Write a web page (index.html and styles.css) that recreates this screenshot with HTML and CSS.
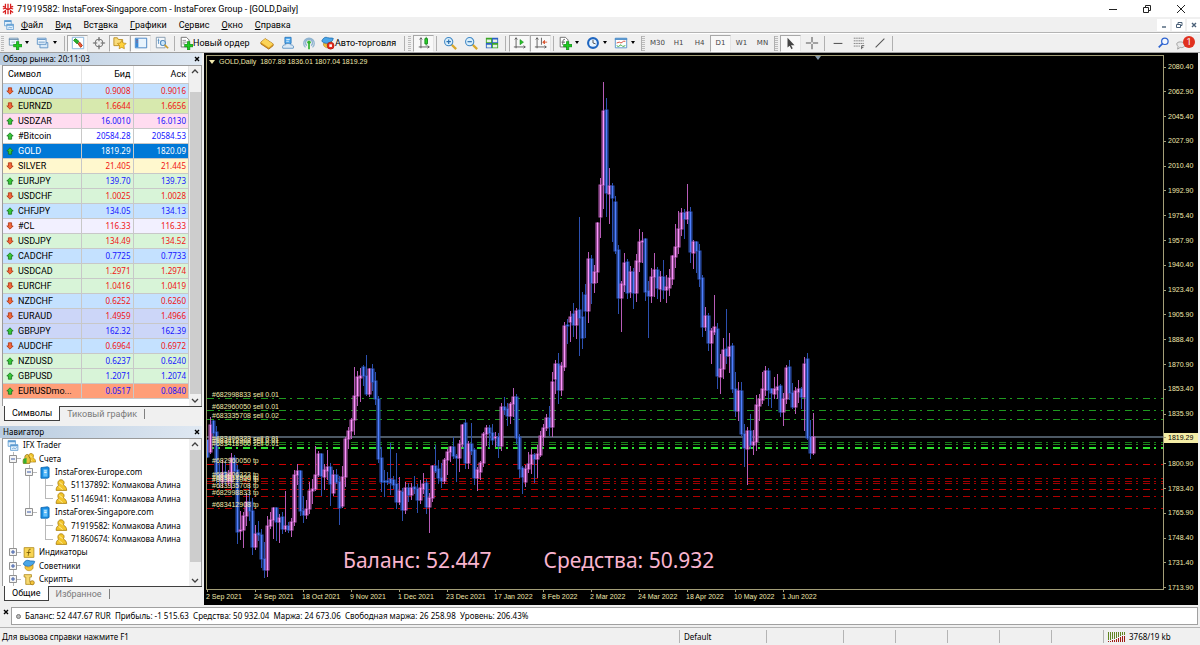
FILE: index.html
```html
<!DOCTYPE html>
<html lang="ru">
<head>
    <meta charset="UTF-8">
    <meta name="viewport" content="width=device-width, initial-scale=1.0">
    <title>71919582: InstaForex-Singapore.com - InstaForex Group - [GOLD,Daily]</title>
    <link rel="stylesheet" href="styles.css">
</head>
<body>

    <!-- Iconos compartidos -->
    <svg class="sprite" aria-hidden="true">
        <symbol id="i-windows" viewBox="0 0 16 16">
            <path d="M2 2h9v7H2z" fill="#e4f1fc" stroke="#5e9bd0"/><path d="M2 2h9v2H2z" fill="#5e9bd0"/>
            <path d="M5 7h9v7H5z" fill="#e4f1fc" stroke="#5e9bd0"/><path d="M5 7h9v2H5z" fill="#5e9bd0"/>
            <path d="M7 12l2-1 2 1 2-2" fill="none" stroke="#5e9bd0"/>
        </symbol>
        <symbol id="i-plus" viewBox="0 0 8 8">
            <path d="M3 0h2v3h3v2H5v3H3V5H0V3h3z" fill="#1fce1f" stroke="#0a8a12" stroke-width=".7"/>
        </symbol>
        <symbol id="i-user" viewBox="0 0 16 16">
            <path d="M2 14c0-3 1-5 3-6C3 4 5 1 8 1s5 3 3 6c2 2 4 3 4 7z" fill="#f2c52c" stroke="#a67a0c"/>
            <path d="M6 4l4 3M5 9l5 4" stroke="#fff3b0"/>
        </symbol>
        <symbol id="i-server" viewBox="0 0 16 16">
            <path d="M3 2l8-1 2 1v12l-2 1H3z" fill="#1b8fe4" stroke="#0b62ad"/>
            <path d="M6 4h5v9H6z" fill="#65c0fa"/><path d="M7 6h3M7 8h3" stroke="#fff"/>
        </symbol>
        <symbol id="i-up" viewBox="0 0 10 10"><path d="M5 1l4 4H7v4H3V5H1z" fill="#37c837" stroke="#17731d"/></symbol>
        <symbol id="i-down" viewBox="0 0 10 10"><path d="M5 9l4-4H7V1H3v4H1z" fill="#f4673a" stroke="#a83212"/></symbol>
        <symbol id="i-caret" viewBox="0 0 6 4"><path d="M1 0h4L3 3z" fill="#000"/></symbol>
        <symbol id="i-chev-up" viewBox="0 0 8 8"><path d="M1 5l3-3 3 3" fill="none" stroke="#404040" stroke-width="1.3"/></symbol>
        <symbol id="i-chev-down" viewBox="0 0 8 8"><path d="M1 3l3 3 3-3" fill="none" stroke="#404040" stroke-width="1.3"/></symbol>
        <symbol id="i-x" viewBox="0 0 8 8"><path d="M2 2l4 4M6 2L2 6" stroke="#000" stroke-width="1.4"/></symbol>
        <symbol id="i-plusbox" viewBox="0 0 8 8"><path d="M.5 .5h7v7h-7z" fill="#f4f4f4" stroke="#919191"/><path d="M2 4h4M4 2v4" stroke="#3a5aa8"/></symbol>
        <symbol id="i-minusbox" viewBox="0 0 8 8"><path d="M.5 .5h7v7h-7z" fill="#f4f4f4" stroke="#919191"/><path d="M2 4h4" stroke="#3a5aa8"/></symbol>
        <symbol id="i-expert" viewBox="0 0 16 16">
            <path d="M1 6c2-4 4-5 7-4s5 0 7 1c-1 4-4 6-8 6-3 0-5-1-6-3z" fill="#4aa6e8" stroke="#1b6bb0"/>
            <path d="M3 9l5 1 5-3v4c-1 4-8 5-10 0z" fill="#f4c63e" stroke="#a97d15" stroke-width=".7"/>
        </symbol>
    </svg>

    <header class="titlebar">
        <svg class="logo" viewBox="0 0 14 14"><path d="M7 1v12M4 1v4L1 4M10 1v4l3-1M1 7l3-1 3 2 3-2 3 1M4 13V9l-3 2M10 13V9l3 2" fill="none" stroke="#d81e1e" stroke-width="1.5"/></svg>
        <h1>71919582: InstaForex-Singapore.com - InstaForex Group - [GOLD,Daily]</h1>
        <div class="window-controls">
            <button type="button" aria-label="Свернуть"><svg viewBox="0 0 10 10"><path d="M1 5.500h8" stroke="#222"/></svg></button>
            <button type="button" aria-label="Восстановить"><svg viewBox="0 0 10 10"><path d="M1.500 3.500h5v5h-5zM3.500 3V1.500h5v5H7" fill="none" stroke="#222"/></svg></button>
            <button type="button" aria-label="Закрыть"><svg viewBox="0 0 10 10"><path d="M1 1l8 8M9 1L1 9" stroke="#222"/></svg></button>
        </div>
    </header>

    <nav class="menubar">
        <svg class="icon"><use href="#i-windows"/></svg>
        <button type="button"><u>Ф</u>айл</button>
        <button type="button"><u>В</u>ид</button>
        <button type="button">Вст<u>а</u>вка</button>
        <button type="button"><u>Г</u>рафики</button>
        <button type="button">С<u>е</u>рвис</button>
        <button type="button"><u>О</u>кно</button>
        <button type="button"><u>С</u>правка</button>
        <div class="child-controls">
            <button type="button" aria-label="Свернуть график"><svg viewBox="0 0 8 8"><path d="M2 6h4" stroke="#4a6078" stroke-width="1.400"/></svg></button>
            <button type="button" aria-label="Восстановить график"><svg viewBox="0 0 8 8"><path d="M1.500 3.500h4v3h-4zM3 3V1.500h4v3H6" fill="none" stroke="#4a6078"/></svg></button>
            <button type="button" aria-label="Закрыть график"><svg viewBox="0 0 8 8"><path d="M2 2l4 4M6 2L2 6" stroke="#4a6078" stroke-width="1.400"/></svg></button>
        </div>
    </nav>

    <div class="toolbar">
        <span class="grip"></span>
        <button type="button" class="drop" aria-label="Новый график">
            <svg class="icon" viewBox="0 0 16 16"><path d="M1.500 2.500h10v8h-10z" fill="#eef6fd" stroke="#6b8fae"/><path d="M1 4h11" stroke="#6b8fae"/><path d="M4 7h4" stroke="#9ab5cc"/><use href="#i-plus" x="6" y="6" width="10" height="10"/></svg>
            <svg class="caret"><use href="#i-caret"/></svg>
        </button>
        <button type="button" class="drop" aria-label="Профили">
            <svg class="icon" viewBox="0 0 16 16"><path d="M4.500 7.500h9v6h-9z" fill="#d8e9f8" stroke="#5a8fc4"/><path d="M1.500 2.500h10v7h-10z" fill="#eef6fd" stroke="#5a8fc4"/><path d="M2 4h9M3 7h7" stroke="#5a8fc4"/></svg>
            <svg class="caret"><use href="#i-caret"/></svg>
        </button>
        <span class="sep"></span>
        <button type="button" class="pressed" aria-label="Обзор рынка"><svg class="icon" viewBox="0 0 16 16"><path d="M1.500 1.500h13v13h-13z" fill="#fff" stroke="#7fb0dc"/><path d="M3 5l2-2 4 3-2 3z" fill="#28b828" stroke="#147a1a"/><path d="M8 9l2-2 3 4-2 2z" fill="#ef5a36" stroke="#a83212"/></svg></button>
        <button type="button" aria-label="Окно данных"><svg class="icon" viewBox="0 0 16 16"><circle cx="8" cy="8" r="4.500" fill="none" stroke="#666"/><path d="M8 1v5M8 10v5M1 8h5M10 8h5" stroke="#666" stroke-width="1.300"/></svg></button>
        <button type="button" class="pressed" aria-label="Навигатор"><svg class="icon" viewBox="0 0 16 16"><path d="M1 2h4l1 2h5v7H1z" fill="#f9dc7c" stroke="#b98b1b"/><path d="M10 5l1.500 3 3.500.5-2.500 2.500.5 3.500-3-1.500-3 1.500.5-3.500L5 8.500 8.500 8z" fill="#ffd23c" stroke="#bb8612" stroke-width=".8"/></svg></button>
        <button type="button" class="pressed" aria-label="Терминал"><svg class="icon" viewBox="0 0 16 16"><path d="M1.500 2.500h13v11h-13z" fill="#e9f4fd" stroke="#3a7cc0"/><path d="M2 3h3v10H2z" fill="#3a8ad8"/><path d="M3 5h1M3 7h1" stroke="#f04030"/></svg></button>
        <button type="button" aria-label="Тестер стратегий"><svg class="icon" viewBox="0 0 16 16"><path d="M1.500 1.500h10v12h-10z" fill="#f4f8fc" stroke="#8298ab"/><path d="M4 3v6M7 5v6M3 5h2" stroke="#5c93c4"/><circle cx="9" cy="8" r="3" fill="#bfe0f8" fill-opacity=".8" stroke="#3b7cb8"/><path d="M11 10l4 4" stroke="#c89a2a" stroke-width="2"/></svg></button>
        <span class="sep"></span>
        <button type="button" class="order"><svg class="icon" viewBox="0 0 16 16"><path d="M2.500 1.500h6l3 3v8h-9z" fill="#fff" stroke="#666"/><path d="M4 5h4M4 7h5M4 9h3" stroke="#888"/><use href="#i-plus" x="6" y="6" width="10" height="10"/></svg>Новый ордер</button>
        <button type="button" aria-label="Редактор"><svg class="icon" viewBox="0 0 16 16"><path d="M1 7l5-4 9 6v2l-5 4-9-6z" fill="#e0a022" stroke="#a8701a"/><path d="M1 7l5-4 9 6-5 4z" fill="#fbd458"/></svg></button>
        <button type="button" aria-label="Виртуальный хостинг"><svg class="icon" viewBox="0 0 16 16"><path d="M4.500 1.500h7v7h-7z" fill="#58aef0" stroke="#2474bb"/><path d="M6 4h4M6 6h3" stroke="#e4f4ff"/><path d="M2 14c-1-3 1-4 3-4 1-2 5-2 6 0 3 0 4 2 3 4z" fill="#dbe9f5" stroke="#5d92c2"/></svg></button>
        <button type="button" aria-label="Сигналы"><svg class="icon" viewBox="0 0 16 16"><path d="M4 13a6 6 0 1 1 8 0M5.500 11a4 4 0 1 1 5 0" fill="none" stroke="#8fb4d0" stroke-width="1.500"/><circle cx="8" cy="7" r="2" fill="#35b535"/><path d="M8 8v7" stroke="#35b535" stroke-width="2"/></svg></button>
        <button type="button" class="auto"><svg class="icon" viewBox="0 0 16 16"><use href="#i-expert" width="15" height="15"/><circle cx="11" cy="11" r="4" fill="#e32a1c" stroke="#9d120a" stroke-width=".6"/><path d="M9.500 9.500h3v3h-3z" fill="#fff"/></svg>Авто-торговля</button>
        <span class="sep"></span>
        <span class="grip"></span>
        <button type="button" class="pressed" aria-label="Японские свечи"><svg class="icon" viewBox="0 0 16 16"><path d="M4.500 2v12M2 12.500h12M3 4l1.500-2L6 4M12 11l2 1.500-2 1.500" fill="none" stroke="#555"/><path d="M10.500 1v10" stroke="#128a18"/><path d="M9 3h3v6H9z" fill="#2bd02b" stroke="#128a18"/></svg></button>
        <span class="sep"></span>
        <button type="button" aria-label="Увеличить"><svg class="icon" viewBox="0 0 16 16"><path d="M10 10l5 5" stroke="#d9a82c" stroke-width="2.600"/><circle cx="6.500" cy="6.500" r="4.700" fill="#d8effc" stroke="#3f86c4" stroke-width="1.200"/><path d="M4 6.500h5M6.500 4v5" stroke="#2a6fb0" stroke-width="1.300"/></svg></button>
        <button type="button" aria-label="Уменьшить"><svg class="icon" viewBox="0 0 16 16"><path d="M10 10l5 5" stroke="#d9a82c" stroke-width="2.600"/><circle cx="6.500" cy="6.500" r="4.700" fill="#d8effc" stroke="#3f86c4" stroke-width="1.200"/><path d="M4 6.500h5" stroke="#2a6fb0" stroke-width="1.300"/></svg></button>
        <button type="button" aria-label="Окна мозаикой"><svg class="icon" viewBox="0 0 16 16"><path d="M1 2h7v6H1zM8 8h7v6H8z" fill="#3aa526"/><path d="M8 2h7v6H8zM1 8h7v6H1z" fill="#2a5fc4"/><path d="M2 4h5v3H2zM9 4h5v3H9zM2 10h5v3H2zM9 10h5v3H9z" fill="#e6f2e6"/></svg></button>
        <span class="sep wide"></span>
        <button type="button" class="pressed" aria-label="Автопрокрутка"><svg class="icon" viewBox="0 0 16 16"><path d="M3.500 2v12M1 12.500h13M2 4l1.500-2L5 4M12 11l2 1.500-2 1.500" fill="none" stroke="#555"/><path d="M8 4l4 3-4 3z" fill="#2bc02b" stroke="#128a18" stroke-width=".6"/></svg></button>
        <button type="button" class="pressed" aria-label="Сдвиг графика"><svg class="icon" viewBox="0 0 16 16"><path d="M3.500 2v12M1 12.500h13M2 4l1.500-2L5 4M12 11l2 1.500-2 1.500M8.500 2v8" fill="none" stroke="#555"/><path d="M10 7l2-2v4zM12 7h3" fill="#d8502a" stroke="#d8502a"/></svg></button>
        <span class="sep"></span>
        <button type="button" class="drop" aria-label="Индикаторы">
            <svg class="icon" viewBox="0 0 16 16"><path d="M2.500 1.500h6l3 3v8h-9z" fill="#fff" stroke="#666"/><path d="M8 4c-3-1-2 3-3 6M4 7h4" fill="none" stroke="#555"/><use href="#i-plus" x="6" y="6" width="10" height="10"/></svg>
            <svg class="caret"><use href="#i-caret"/></svg>
        </button>
        <button type="button" class="drop" aria-label="Периоды">
            <svg class="icon" viewBox="0 0 16 16"><circle cx="8" cy="8" r="5.600" fill="#e9f5ff" stroke="#1f66c0" stroke-width="2.400"/><path d="M8 4.500V8l3 1" fill="none" stroke="#444"/></svg>
            <svg class="caret"><use href="#i-caret"/></svg>
        </button>
        <button type="button" class="drop" aria-label="Шаблоны">
            <svg class="icon" viewBox="0 0 16 16"><path d="M1.500 2.500h13v11h-13z" fill="#fff" stroke="#4f8fca"/><path d="M1 3.500h14" stroke="#4f8fca" stroke-width="2"/><path d="M3 8l3-1 2 1 3-2h2" fill="none" stroke="#d0402a"/><path d="M3 11l2 1 3-2 2 2 3-1" fill="none" stroke="#2aa23a"/></svg>
            <svg class="caret"><use href="#i-caret"/></svg>
        </button>
        <span class="grip line"></span>
        <button type="button" class="tf">M30</button>
        <button type="button" class="tf">H1</button>
        <button type="button" class="tf">H4</button>
        <button type="button" class="tf pressed">D1</button>
        <button type="button" class="tf">W1</button>
        <button type="button" class="tf">MN</button>
        <span class="grip line"></span>
        <button type="button" class="pressed" aria-label="Курсор"><svg class="icon" viewBox="0 0 16 16"><path d="M4 2v11l2.500-2 2 4 1.500-1-2-3.500H12z" fill="#444"/></svg></button>
        <button type="button" aria-label="Перекрестие"><svg class="icon" viewBox="0 0 16 16"><path d="M8 1v6M8 9v6M1 8h6M9 8h6" stroke="#555" stroke-width="1.200"/></svg></button>
        <span class="sep"></span>
        <button type="button" aria-label="Горизонтальная линия"><svg class="icon" viewBox="0 0 16 16"><path d="M3 8.500h10" stroke="#555" stroke-width="1.200"/></svg></button>
        <button type="button" aria-label="Линии Фибоначчи"><svg class="icon" viewBox="0 0 16 16"><path d="M2 2.500h12M2 5.500h12M2 8.500h12M2 11.500h7" stroke="#777" stroke-dasharray="1.500 .5"/><path d="M11 15v-4h3M11 13h2" fill="none" stroke="#555"/></svg></button>
        <button type="button" aria-label="Трендовая линия"><svg class="icon" viewBox="0 0 16 16"><path d="M3 13l10-10" stroke="#555" stroke-width="1.200"/></svg></button>
        <span class="sep"></span>
        <div class="toolbar-end">
            <button type="button" aria-label="Поиск"><svg class="icon" viewBox="0 0 16 16"><path d="M2 13l5-5" stroke="#2b62d0" stroke-width="2"/><circle cx="9" cy="6" r="3.700" fill="#f4f8ff" stroke="#2b62d0" stroke-width="1.400"/></svg></button>
            <button type="button" class="chat" aria-label="Сообщения"><svg class="icon" viewBox="0 0 16 16"><path d="M2 9c0-3 8-3 9 0s-2 5-5 4l-3 2 .5-3C2.500 11 2 10 2 9z" fill="#e8e8e8" stroke="#9a9a9a"/></svg><span class="badge">1</span></button>
        </div>
    </div>

    <main class="workspace">
        <aside class="side">
            <section class="panel market">
                <div class="panel-title"><h2>Обзор рынка: 20:11:03</h2><button type="button" aria-label="Закрыть обзор рынка"><svg><use href="#i-x"/></svg></button></div>
                <div class="panel-body">
                    <table>
                        <thead><tr><th>Символ</th><th>Бид</th><th>Аск</th></tr></thead>
                        <tbody id="quotes"></tbody>
                    </table>
                    <div class="scrollbar"><svg><use href="#i-chev-up"/></svg><span class="thumb"></span><svg><use href="#i-chev-down"/></svg></div>
                </div>
                <div class="tabs"><button type="button" class="active">Символы</button><button type="button">Тиковый график</button></div>
            </section>

            <section class="panel navigator">
                <div class="panel-title"><h2>Навигатор</h2><button type="button" aria-label="Закрыть навигатор"><svg><use href="#i-x"/></svg></button></div>
                <div class="panel-body">
                    <ul class="tree">
                        <li><svg class="node"><use href="#i-windows"/></svg>IFX Trader</li>
                        <li><button type="button" class="guide elbow" aria-label="Свернуть Счета"><svg><use href="#i-minusbox"/></svg></button><svg class="node" viewBox="0 0 16 16"><use href="#i-user" x="4" y="0" width="13" height="15"/><path d="M1 14c-1-5 1-6 2-7-1-4 5-6 5-1 2 2 2 4 1 8z" fill="#e8c33c" stroke="#937012"/><path d="M1 14V9l4-2v7z" fill="#35ae30"/></svg>Счета</li>
                        <li><span class="guide"></span><button type="button" class="guide elbow" aria-label="Свернуть InstaForex-Europe.com"><svg><use href="#i-minusbox"/></svg></button><svg class="node"><use href="#i-server"/></svg>InstaForex-Europe.com</li>
                        <li><span class="guide"></span><span class="guide"></span><span class="guide elbow"></span><svg class="node"><use href="#i-user"/></svg>51137892: Колмакова Алина</li>
                        <li><span class="guide"></span><span class="guide"></span><span class="guide elbow last"></span><svg class="node"><use href="#i-user"/></svg>51146941: Колмакова Алина</li>
                        <li><span class="guide"></span><button type="button" class="guide elbow last" aria-label="Свернуть InstaForex-Singapore.com"><svg><use href="#i-minusbox"/></svg></button><svg class="node"><use href="#i-server"/></svg>InstaForex-Singapore.com</li>
                        <li><span class="guide"></span><span class="guide empty"></span><span class="guide elbow"></span><svg class="node"><use href="#i-user"/></svg>71919582: Колмакова Алина</li>
                        <li><span class="guide"></span><span class="guide empty"></span><span class="guide elbow last"></span><svg class="node"><use href="#i-user"/></svg>71860674: Колмакова Алина</li>
                        <li><button type="button" class="guide elbow" aria-label="Развернуть Индикаторы"><svg><use href="#i-plusbox"/></svg></button><svg class="node" viewBox="0 0 16 16"><path d="M2 2h12v12H2z" fill="#f8d452" stroke="#b08a1c"/><path d="M10 4c-3-1-2 3-3 8M5 8h5" fill="none" stroke="#6a4d00"/></svg>Индикаторы</li>
                        <li><button type="button" class="guide elbow" aria-label="Развернуть Советники"><svg><use href="#i-plusbox"/></svg></button><svg class="node"><use href="#i-expert"/></svg>Советники</li>
                        <li><button type="button" class="guide elbow" aria-label="Развернуть Скрипты"><svg><use href="#i-plusbox"/></svg></button><svg class="node" viewBox="0 0 16 16"><path d="M2 2h9v3H9v6h4v3H4V5H2z" fill="#f7d971" stroke="#b08a1c"/><circle cx="12" cy="12" r="2.500" fill="#f4c63e" stroke="#a97d15"/></svg>Скрипты</li>
                    </ul>
                    <div class="scrollbar"><svg><use href="#i-chev-up"/></svg><span class="thumb"></span><svg><use href="#i-chev-down"/></svg></div>
                </div>
                <div class="tabs"><button type="button" class="active">Общие</button><button type="button">Избранное</button></div>
            </section>
        </aside>

        <section class="chart">
            <div class="plot">
                <svg id="plot" class="plot-canvas"></svg>
                <p class="chart-title"><svg viewBox="0 0 6 4"><path d="M0 0h6L3 4z" fill="#f0e8ac"/></svg>GOLD,Daily&nbsp; 1807.89 1836.01 1807.04 1819.29</p>
                <p class="totals"><span>Баланс: 52.447</span><span>Средства: 50.932</span></p>
            </div>
            <ol id="prices" class="price-axis"></ol>
            <ol id="dates" class="time-axis"></ol>
        </section>
    </main>

    <section class="account">
        <button type="button" aria-label="Закрыть терминал"><svg><use href="#i-x"/></svg></button>
        <p><span class="dot"></span>Баланс: 52 447.67 RUR&nbsp; Прибыль: -1 515.63&nbsp; Средства: 50 932.04&nbsp; Маржа: 24 673.06&nbsp; Свободная маржа: 26 258.98&nbsp; Уровень: 206.43%</p>
    </section>

    <footer class="statusbar">
        <span class="hint">Для вызова справки нажмите F1</span>
        <span class="profile">Default</span>
        <span class="cell first"></span>
        <span class="cell"></span>
        <span class="cell"></span>
        <span class="cell"></span>
        <span class="cell"></span>
        <span class="cell"></span>
        <span class="traffic">
            <svg viewBox="0 0 18 10"><path d="M.5 0v8M2.500 0v8M4.500 0v7M6.500 0v7M8.500 0v6M10.500 0v5M12.500 0v4M14.500 0v3M16.500 0v3" stroke="#5f8420"/><path d="M.5 9v1M2.500 9v1M4.500 8v2M6.500 8v2M8.500 7v3M10.500 6v4M12.500 5v5M14.500 4v6M16.500 4v6" stroke="#a01810"/></svg>
            3768/19 kb
        </span>
    </footer>

    <script src="chart.js"></script>
</body>
</html>
```

FILE: styles.css
```css
* {
    box-sizing: border-box;
}

body {
    margin: 0;
    min-height: 100vh;
    display: flex;
    flex-direction: column;
    background: #f0f0f0;
    color: #000;
    font-family: "Noto Sans", "Open Sans", sans-serif;
    font-size: 8px;
    line-height: 12px;
}

.titlebar,
.menubar,
.toolbar,
.tabs,
th,
.symbol {
    font-family: Roboto, "Noto Sans", sans-serif;
    font-size: 9px;
}

h1, h2, p, ul, ol {
    margin: 0;
    padding: 0;
    font-size: inherit;
    font-weight: normal;
    list-style: none;
}

button {
    display: flex;
    align-items: center;
    justify-content: center;
    margin: 0;
    padding: 0;
    border: none;
    background: none;
    color: inherit;
    font: inherit;
    white-space: nowrap;
}

.sprite {
    display: none;
}

.icon {
    width: 14px;
    height: 14px;
    flex: none;
}

/* Titulo y menu */
.titlebar {
    display: flex;
    align-items: center;
    height: 17px;
    padding-left: 2px;
    background: #fff;
}

.logo {
    width: 12px;
    height: 12px;
    margin-right: 3px;
}

.window-controls {
    display: flex;
    margin-left: auto;
    padding-right: 2px;
}

.window-controls button {
    width: 34px;
    height: 16px;
}

.window-controls svg {
    width: 10px;
    height: 10px;
}

.menubar {
    display: flex;
    align-items: center;
    height: 16px;
    padding-left: 3px;
    border-bottom: 1px solid #b4b4b4;
}

.menubar .icon {
    width: 12px;
    height: 12px;
}

.menubar > button {
    padding: 0 6px;
}

.child-controls {
    display: flex;
    gap: 2px;
    margin-left: auto;
}

.child-controls button {
    width: 13px;
    height: 12px;
    background: #fff;
}

.child-controls svg {
    width: 8px;
    height: 8px;
}

/* Barra de herramientas */
.toolbar {
    display: flex;
    align-items: center;
    height: 20px;
    border-top: 1px solid #fff;
    border-bottom: 1px solid #a0a0a0;
}

.toolbar button {
    width: 21px;
    height: 17px;
    flex: none;
    border: 1px solid transparent;
}

.toolbar .drop {
    width: 28px;
    justify-content: flex-start;
    padding-left: 1px;
    gap: 2px;
}

.toolbar .pressed {
    background: #f8f8f8;
    border-color: #a8a8a8 #e4e4e4 #fff #a8a8a8;
}

.toolbar .order {
    width: 79px;
    justify-content: flex-start;
    padding-left: 1px;
}

.toolbar .auto {
    width: 83px;
    justify-content: flex-start;
    padding-left: 1px;
}

.toolbar .tf {
    color: #444;
    font-family: "DejaVu Sans", sans-serif;
    font-size: 7px;
}

.caret {
    width: 6px;
    height: 4px;
}

.sep {
    width: 1px;
    height: 15px;
    margin: 0 2px;
    flex: none;
    background: #b0b0b0;
}

.sep.wide {
    margin: 0 3px;
}

.grip {
    width: 3px;
    height: 15px;
    margin: 0 2px 0 1px;
    flex: none;
    background: repeating-linear-gradient(#bcbcbc 0 1px, #f0f0f0 1px 2px);
}

.grip.line {
    width: 4px;
    border-left: 1px solid #b0b0b0;
}

.toolbar-end {
    display: flex;
    margin-left: auto;
    padding-right: 2px;
}

.toolbar .chat {
    position: relative;
    width: 24px;
    justify-content: flex-start;
}

.badge {
    position: absolute;
    top: 0;
    right: 2px;
    width: 12px;
    height: 12px;
    border-radius: 50%;
    background: #e0301e;
    color: #fff;
}

/* Zona principal */
.workspace {
    display: flex;
    flex: 1;
    min-height: 0;
}

.side {
    display: flex;
    flex-direction: column;
    gap: 5px;
    width: 202px;
    padding-bottom: 4px;
    flex: none;
}

.panel {
    display: flex;
    flex-direction: column;
}

.navigator {
    flex: 1;
}

.panel-title {
    display: flex;
    align-items: center;
    justify-content: space-between;
    height: 12px;
    padding: 0 1px 0 3px;
    background: linear-gradient(90deg, #b9cce0, #dfe8f2);
}

.panel-title svg,
.account svg {
    width: 8px;
    height: 8px;
}

.panel-body {
    display: flex;
    flex: 1;
    margin-left: 2px;
    border: 1px solid #9a9a9a;
    border-bottom: none;
    background: #fff;
}

table {
    flex: 1;
    margin-bottom: 7px;
    border-collapse: collapse;
    table-layout: fixed;
}

th, td {
    height: 15px;
    padding: 0 2px 0 0;
    border-right: 1px solid #c8c8c8;
    border-bottom: 1px solid #c8c8c8;
    text-align: right;
    font-weight: normal;
    line-height: 12px;
}

th {
    height: 17px;
    border-right-color: #e4e4e4;
}

th:first-child {
    width: 78px;
    padding-left: 5px;
    text-align: left;
}

th:nth-child(2) {
    width: 52px;
}

.symbol {
    display: flex;
    align-items: center;
    gap: 4px;
    padding-left: 3px;
}

.symbol svg {
    width: 8px;
    height: 8px;
}

.up {
    color: #1414ff;
}

.down {
    color: #f01414;
}

.blue { background: #c4e1ff; }
.olive { background: #d7e9ae; }
.pink { background: #ffdcf0; }
.yellow { background: #fff8ce; }
.green { background: #d8f4d8; }
.pale { background: #f2f0ff; }
.violet { background: #ccd6f8; }
.orange { background: #ff9e78; }

.selected,
.selected td {
    background: #0078d7;
    color: #fff;
}

.scrollbar {
    display: flex;
    flex-direction: column;
    align-items: center;
    width: 12px;
    padding: 2px 0;
    flex: none;
    background: #f0f0f0;
}

.scrollbar svg {
    width: 8px;
    height: 8px;
}

.scrollbar .thumb {
    flex: 1;
    width: 11px;
    margin: 1px 0 2px;
    background: #cdcdcd;
}

.market .thumb {
    margin-top: 16px;
}

.navigator .thumb {
    margin-bottom: 14px;
}

.tabs {
    display: flex;
    height: 15px;
    margin-left: 4px;
    border-top: 1px solid #404040;
    color: #7a7a7a;
}

.tabs button {
    padding: 0 7px;
}

.tabs button:last-child::after {
    content: "";
    height: 10px;
    margin-left: 7px;
    border-right: 1px solid #808080;
}

.tabs .active {
    margin-top: -1px;
    border: 1px solid #404040;
    border-top: none;
    background: #fff;
    color: #000;
}

/* Arbol del navegador */
.tree {
    display: flex;
    flex-direction: column;
    flex: 1;
    min-width: 0;
    padding-left: 2px;
}

.tree li {
    display: flex;
    align-items: center;
    flex: 1;
    white-space: nowrap;
}

.node {
    width: 14px;
    height: 13px;
    margin: 0 3px 0 1px;
    flex: none;
}

.guide {
    display: flex;
    align-self: stretch;
    width: 16px;
    flex: none;
    background: linear-gradient(#b8b8b8, #b8b8b8) 8px 0 / 1px 100% no-repeat;
}

.guide svg {
    width: 8px;
    height: 8px;
}

.elbow {
    background:
        linear-gradient(#b8b8b8, #b8b8b8) 8px 0 / 1px 100% no-repeat,
        linear-gradient(#b8b8b8, #b8b8b8) 8px 50% / 8px 1px no-repeat;
}

.elbow.last {
    background:
        linear-gradient(#b8b8b8, #b8b8b8) 8px 0 / 1px 50% no-repeat,
        linear-gradient(#b8b8b8, #b8b8b8) 8px 50% / 8px 1px no-repeat;
}

.guide.empty {
    background: none;
}

/* Grafico */
.chart {
    display: grid;
    grid-template-columns: 1fr 34px;
    grid-template-rows: 1fr 15px;
    flex: 1;
    margin: 0 2px 0 2px;
    padding: 2px 0 0 2px;
    background: #000;
    color: #f0e8ac;
    font-family: "Liberation Sans", Arial, sans-serif;
    font-size: 7px;
    line-height: 10px;
}

.plot {
    position: relative;
    display: flex;
    flex-direction: column;
    justify-content: space-between;
    border: 1px solid #a39e78;
}

.plot-canvas {
    position: absolute;
    inset: 0;
    width: 100%;
    height: 100%;
}

.plot-canvas text {
    fill: #f0e8ac;
}

.chart-title {
    display: flex;
    align-items: center;
    gap: 4px;
    padding: 1px 0 0 2px;
}

.chart-title svg {
    width: 6px;
    height: 4px;
}

.totals {
    position: relative;
    display: flex;
    gap: 52px;
    padding: 0 0 14px 136px;
    color: #f9b4cf;
    font-family: "Noto Sans", "Open Sans", sans-serif;
    font-size: 21px;
    line-height: 30px;
}

.price-axis {
    display: flex;
    flex-direction: column;
    justify-content: space-between;
    margin: 7px 0 -3px;
}

.price-axis li {
    display: flex;
    align-items: center;
    gap: 2px;
}

.price-axis li::before {
    content: "";
    width: 2px;
    height: 1px;
    background: #a39e78;
}

.price-axis .current {
    margin: -1px 0 1px;
    background: #f4eda6;
    color: #000;
}

.time-axis {
    display: flex;
}

.time-axis li {
    width: 48px;
    white-space: nowrap;
}

.time-axis li::before {
    content: "";
    display: block;
    width: 1px;
    height: 2px;
    margin-left: 1px;
    background: #a39e78;
}

.candle-up {
    stroke: #b85cb8;
    fill: #6c3a6c;
}

.candle-down {
    stroke: #2c50b0;
    fill: #213c80;
}

.core-up {
    stroke: #ff96ff;
}

.core-down {
    stroke: #4f80ff;
}

/* Terminal y barra de estado */
.account {
    display: flex;
    align-items: center;
    height: 23px;
    border-bottom: 1px solid #b4b4b4;
}

.account button {
    width: 11px;
    height: 16px;
    align-items: flex-start;
}

.account p {
    display: flex;
    align-items: center;
    gap: 4px;
    flex: 1;
    height: 18px;
    margin-right: 2px;
    padding-left: 4px;
    border: 1px solid #a0a0a0;
    background: #fff;
    white-space: nowrap;
}

.dot {
    width: 5px;
    height: 5px;
    border: 1px solid #777;
    border-radius: 50%;
    background: #bbb;
}

.statusbar {
    display: flex;
    align-items: center;
    height: 17px;
    padding-left: 2px;
}

.hint {
    flex: 1;
}

.profile,
.cell,
.traffic {
    display: flex;
    align-items: center;
    width: 52px;
    height: 13px;
    padding-left: 4px;
    border-left: 1px solid #b4b4b4;
}

.profile {
    width: 87px;
}

.cell.first {
    width: 77px;
}

.traffic {
    gap: 3px;
    width: 97px;
}

.traffic svg {
    width: 18px;
    height: 10px;
}
```

FILE: chart.js
```javascript
const quotes = [
    ['AUDCAD', '0.9008', '0.9016', 'down', 'blue'],
    ['EURNZD', '1.6644', '1.6656', 'down', 'olive'],
    ['USDZAR', '16.0010', '16.0130', 'up', 'pink'],
    ['#Bitcoin', '20584.28', '20584.53', 'up', ''],
    ['GOLD', '1819.29', '1820.09', 'up', 'selected'],
    ['SILVER', '21.405', '21.445', 'down', 'yellow'],
    ['EURJPY', '139.70', '139.73', 'up', 'green'],
    ['USDCHF', '1.0025', '1.0028', 'down', 'green'],
    ['CHFJPY', '134.05', '134.13', 'up', 'blue'],
    ['#CL', '116.33', '116.33', 'down', 'pale'],
    ['USDJPY', '134.49', '134.52', 'down', 'green'],
    ['CADCHF', '0.7725', '0.7733', 'up', 'blue'],
    ['USDCAD', '1.2971', '1.2974', 'down', 'green'],
    ['EURCHF', '1.0416', '1.0419', 'down', 'green'],
    ['NZDCHF', '0.6252', '0.6260', 'down', 'blue'],
    ['EURAUD', '1.4959', '1.4966', 'down', 'violet'],
    ['GBPJPY', '162.32', '162.39', 'up', 'violet'],
    ['AUDCHF', '0.6964', '0.6972', 'down', 'blue'],
    ['NZDUSD', '0.6237', '0.6240', 'up', 'green'],
    ['GBPUSD', '1.2071', '1.2074', 'up', 'green'],
    ['EURUSDmo...', '0.0517', '0.0840', 'up', 'orange']
];

document.getElementById('quotes').innerHTML = quotes.map(([name, bid, ask, dir, color]) =>
    `<tr class="${color}"><td><span class="symbol"><svg><use href="#i-${dir}"/></svg>${name}</span></td>` +
    `<td class="${dir}">${bid}</td><td class="${dir}">${ask}</td></tr>`
).join('');

const prices = ['2080.40', '2062.90', '2045.40', '2027.90', '2010.40', '1992.90', '1975.40', '1957.90',
    '1940.40', '1923.40', '1905.90', '1888.40', '1870.90', '1853.40', '1835.90', '1819.29',
    '1800.90', '1783.40', '1765.90', '1748.40', '1731.40', '1713.90'];

document.getElementById('prices').innerHTML = prices.map(p =>
    `<li${p === '1819.29' ? ' class="current"' : ''}>${p}</li>`
).join('');

const dates = ['2 Sep 2021', '24 Sep 2021', '18 Oct 2021', '9 Nov 2021', '1 Dec 2021', '23 Dec 2021',
    '17 Jan 2022', '8 Feb 2022', '2 Mar 2022', '24 Mar 2022', '18 Apr 2022', '10 May 2022', '1 Jun 2022'];

document.getElementById('dates').innerHTML = dates.map(d => `<li>${d}</li>`).join('');

// u/d + high, open/close top, open/close bottom, low
const candles = `
d440,440,457,457 u417,425,452,453 d420,421,433,435 d426,432,475,482 d463,474,480,487 u460,473,482,487
d460,472,480,484 u470,474,482,485 u453,458,482,488 d455,458,471,474 d465,470,532,543 u511,530,531,539
u512,516,530,547 u493,502,516,525 d483,502,511,520 d498,511,547,554 u525,534,547,549 d521,533,535,540
d529,535,559,567 d542,559,570,577 u516,526,570,576 u512,520,526,528 u507,508,520,538 d507,508,522,540
u514,518,522,542 d512,517,529,533 u491,526,529,531 d522,526,530,532 u518,522,530,536 u470,475,522,525
u464,471,475,484 d470,471,511,515 d496,511,515,522 u500,509,515,518 u482,491,509,513 u479,489,491,503
u446,475,489,490 u451,454,475,476 d453,454,476,495 u464,470,477,489 u450,467,471,479 d463,467,484,505
u470,475,493,495 d469,475,482,483 d476,482,508,524 u466,477,506,507 u437,439,477,486 u427,431,439,448
u418,420,431,438 u367,396,420,434 u371,377,396,405 u368,376,378,401 d365,367,376,385 d355,376,394,395
u368,369,394,396 d364,369,382,390 d372,381,399,404 d396,399,459,462 d447,458,482,491 d470,481,482,496
d472,481,482,484 d443,479,483,494 d476,480,485,488 d453,484,502,508 u477,491,502,504 d488,492,510,520
u482,488,510,513 d483,488,495,501 u483,488,495,499 d476,487,489,493 d484,489,500,512 u480,488,500,503
u473,484,489,493 d479,483,507,513 u493,498,507,532 u465,466,498,501 d445,466,471,472 d460,469,478,483
d463,478,481,487 u458,460,481,483 u449,452,460,474 u446,447,452,461 d437,447,456,458 d454,456,458,481
u440,444,458,471 u424,425,444,446 d419,423,463,468 u441,444,463,468 d423,444,451,454 d448,450,478,484
u467,470,478,490 u461,463,472,479 u432,434,463,466 u425,428,434,445 d425,428,433,447 d424,433,440,444
u432,437,438,446 d433,437,446,457 u403,407,446,450 d397,407,410,414 d403,409,416,425 u402,404,416,423
u388,397,404,416 d394,397,438,443 d434,437,469,477 d466,468,477,493 u465,469,482,486 u452,464,469,472
u449,455,464,473 d453,455,459,482 u445,454,459,477 u431,436,455,456 u424,428,437,445 u414,418,428,430
d406,418,427,435 u372,382,427,436 u360,364,379,393 d353,364,390,403 u362,366,390,395 u322,326,367,370
d319,325,326,343 u311,317,322,341 d303,314,325,336 u308,311,325,338 d217,310,318,355 d292,317,338,348
d284,295,311,337 u252,259,311,322 d255,259,283,303 u265,272,283,292 u222,223,272,282 u178,185,217,237
u82,111,185,208 d98,110,193,216 u168,186,194,223 d183,186,198,241 d196,202,251,253 d245,250,298,313
u281,284,298,331 u253,263,285,291 d259,262,293,298 u266,272,292,297 d268,272,293,308 u254,261,293,301
u229,242,262,271 u232,241,242,262 d238,239,292,300 d281,291,296,337 u268,277,296,302 u253,270,277,296
d267,270,288,298 u271,277,289,301 d260,277,290,298 u275,287,290,302 u269,278,288,295 u255,256,279,284
u224,247,257,267 u211,229,247,253 u208,213,229,235 d209,213,219,238 u184,212,219,223 d207,212,252,262
u240,242,253,268 d241,242,251,272 d244,251,279,286 d275,278,327,336 u307,316,327,330 d313,316,343,350
u328,331,343,363 u295,327,332,334 d323,329,376,388 u354,369,377,393 u338,350,369,378 d309,349,356,363
u333,347,356,372 d343,346,389,392 d372,389,411,416 u382,391,411,420 d382,391,434,435 d424,434,448,466
u427,431,449,484 d414,431,445,448 u430,442,445,454 u395,405,442,450 u394,399,406,420 u372,389,400,403
u366,371,390,395 d368,371,390,405 d388,389,393,407 u377,389,394,398 u374,387,390,398 d384,386,412,416
u393,399,412,425 u365,368,399,403 d360,367,393,399 d383,393,407,408 u387,391,407,413 u380,389,392,402
d387,389,397,408 u357,364,397,430 d353,359,438,439 d420,437,453,458 u413,437,453,454`.trim().split(/\s+/);

// y, color, grosor, etiqueta
const orders = [
    [398, '#1f9a1f', 1, '#682998833 sell 0.01'],
    [410, '#1f9a1f', 1, '#682960050 sell 0.01'],
    [419, '#1f9a1f', 1, '#683335708 sell 0.02'],
    [442, '#1a7a1a', 1, '#683406323 sell 0.01'],
    [444, '#1f8a1f', 1, '#683412908 sell 0.01'],
    [447, '#2fe02f', 2, '#683418900 sell 0.01'],
    [464, '#d00000', 1, '#682960050 tp'],
    [478, '#b00000', 1, '#683406323 tp'],
    [481, '#a00000', 1, '#683418900 tp'],
    [483, '#a00000', 1, '#683421049 tp'],
    [489, '#c00000', 1, '#683335708 tp'],
    [496, '#b00000', 1, '#682998833 tp'],
    [508, '#b00000', 1, '#683412908 tp']
];

const top0 = 56;
let svg = '';

orders.forEach(([y, color, width]) => {
    const ly = y - top0 + width / 2;
    svg += `<line x1="0" x2="100%" y1="${ly}" y2="${ly}" stroke="${color}" stroke-width="${width}" stroke-dasharray="7 4 2 5"/>`;
});

svg += `<line x1="0" x2="100%" y1="${437 - top0}" y2="${437 - top0}" stroke="#4c5864" stroke-width="2"/>`;

candles.forEach((c, i) => {
    const dir = c[0] === 'u' ? 'up' : 'down';
    const [high, top, bottom, low] = c.slice(1).split(',').map(v => v - top0);
    const x = i * 3;
    const h = Math.max(bottom - top, 1);
    svg += `<rect class="candle-${dir}" stroke="none" x="${x - 1}" y="${top}" width="3" height="${h}"/>`;
    svg += `<line class="candle-${dir}" x1="${x + 0.5}" x2="${x + 0.5}" y1="${high}" y2="${low + 1}"/>`;
    svg += `<line class="core-${dir}" x1="${x + 0.5}" x2="${x + 0.5}" y1="${top}" y2="${top + h}"/>`;
});

orders.forEach(([y, , , label]) => {
    svg += `<text x="5" y="${y - 1 - top0}">${label}</text>`;
});

// Marca de desplazamiento del grafico
svg += '<path d="M608 0h6l-3 4z" fill="#8296a8"/>';

document.getElementById('plot').innerHTML = svg;
```
